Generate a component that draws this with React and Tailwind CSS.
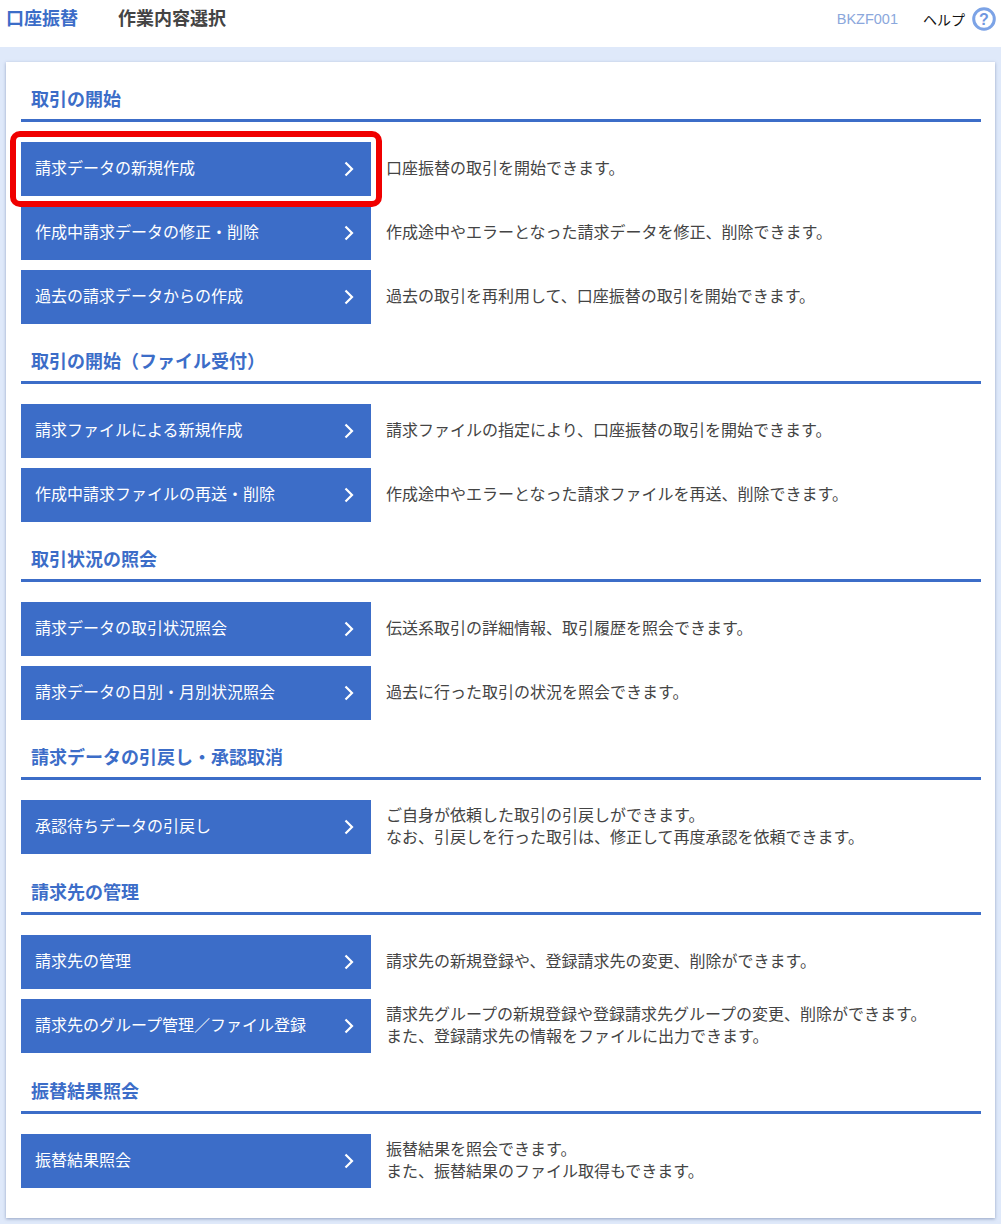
import React from "react";

const sections = [
  {
    title: "取引の開始",
    gap: "mb-[22px]",
    items: [
      { label: "請求データの新規作成", desc: ["口座振替の取引を開始できます。"], marked: true },
      { label: "作成中請求データの修正・削除", desc: ["作成途中やエラーとなった請求データを修正、削除できます。"] },
      { label: "過去の請求データからの作成", desc: ["過去の取引を再利用して、口座振替の取引を開始できます。"] },
    ],
  },
  {
    title: "取引の開始（ファイル受付）",
    gap: "mb-[22px]",
    items: [
      { label: "請求ファイルによる新規作成", desc: ["請求ファイルの指定により、口座振替の取引を開始できます。"] },
      { label: "作成中請求ファイルの再送・削除", desc: ["作成途中やエラーとなった請求ファイルを再送、削除できます。"] },
    ],
  },
  {
    title: "取引状況の照会",
    gap: "mb-[22px]",
    items: [
      { label: "請求データの取引状況照会", desc: ["伝送系取引の詳細情報、取引履歴を照会できます。"] },
      { label: "請求データの日別・月別状況照会", desc: ["過去に行った取引の状況を照会できます。"] },
    ],
  },
  {
    title: "請求データの引戻し・承認取消",
    gap: "mb-[23px]",
    items: [
      {
        label: "承認待ちデータの引戻し",
        desc: ["ご自身が依頼した取引の引戻しができます。", "なお、引戻しを行った取引は、修正して再度承認を依頼できます。"],
      },
    ],
  },
  {
    title: "請求先の管理",
    gap: "mb-[23px]",
    items: [
      { label: "請求先の管理", desc: ["請求先の新規登録や、登録請求先の変更、削除ができます。"] },
      {
        label: "請求先のグループ管理／ファイル登録",
        desc: ["請求先グループの新規登録や登録請求先グループの変更、削除ができます。", "また、登録請求先の情報をファイルに出力できます。"],
      },
    ],
  },
  {
    title: "振替結果照会",
    gap: "mb-0",
    items: [
      {
        label: "振替結果照会",
        desc: ["振替結果を照会できます。", "また、振替結果のファイル取得もできます。"],
      },
    ],
  },
];

function MenuRow({ item }) {
  return (
    <div className="flex items-center">
      <div className="relative shrink-0">
        <button
          type="button"
          className="flex h-[54px] w-[350px] items-center justify-between bg-[#3c6dc8] pl-[14px] pr-[17px] text-[16px] text-white"
        >
          <span className="pb-[5px]">{item.label}</span>
          <svg width="10" height="16" viewBox="0 0 10 16" fill="none" stroke="white" strokeWidth="2.2">
            <polyline points="1.5,1.5 8,8 1.5,14.5" />
          </svg>
        </button>
        {item.marked && (
          <div className="absolute -inset-x-[11px] -inset-y-[11px] z-10 rounded-[10px] border-[6px] border-[#f00000]" />
        )}
      </div>
      <div className="ml-[15px] pb-[5px] text-[16px] leading-[22px] text-[#444444]">
        {item.desc.map((line) => (
          <p key={line}>{line}</p>
        ))}
      </div>
    </div>
  );
}

export default function App() {
  return (
    <div
      className="h-[1224px] w-[1001px] overflow-hidden bg-[#dfe9fa]"
      style={{ fontFamily: '"Noto Sans CJK JP", "Noto Sans", sans-serif' }}
    >
      <header className="flex h-[47px] items-start bg-white pl-[6px] pr-[5px] pt-[5px]">
        <h1 className="text-[18px] font-bold leading-[24px] text-[#3c6dc8]">口座振替</h1>
        <h2 className="ml-[40px] text-[18px] font-bold leading-[24px] text-[#444444]">作業内容選択</h2>
        <div className="ml-auto flex items-center pt-[2px]">
          <span className="text-[14.5px] leading-[24px] text-[#8ba7dc]" style={{ fontFamily: '"Liberation Sans", sans-serif' }}>
            BKZF001
          </span>
          <span className="ml-[25px] text-[14px] leading-[24px] text-[#111111]">ヘルプ</span>
          <svg className="ml-[7px]" width="24" height="24" viewBox="0 0 24 24">
            <circle cx="12" cy="12" r="10.3" fill="white" stroke="#7ca3e6" strokeWidth="3" />
            <text x="12" y="17.5" textAnchor="middle" fontSize="16" fontWeight="700" fill="#6f97df" fontFamily="Liberation Sans">
              ?
            </text>
          </svg>
        </div>
      </header>

      <main className="ml-[6px] mt-[15px] h-[1156px] w-[989px] bg-white pl-[15px] pr-[14px] pt-[22px] shadow-[0_1px_3px_rgba(90,110,150,0.55)]">
        {sections.map((section) => (
          <section key={section.title} className={section.gap}>
            <h3 className="h-[38px] border-b-[3px] border-[#3c6dc8] pl-[10px] text-[18px] font-bold leading-[28px] text-[#3c6dc8]">
              {section.title}
            </h3>
            <div className="mt-[20px] flex flex-col gap-[10px]">
              {section.items.map((item) => (
                <MenuRow key={item.label} item={item} />
              ))}
            </div>
          </section>
        ))}
      </main>
    </div>
  );
}
